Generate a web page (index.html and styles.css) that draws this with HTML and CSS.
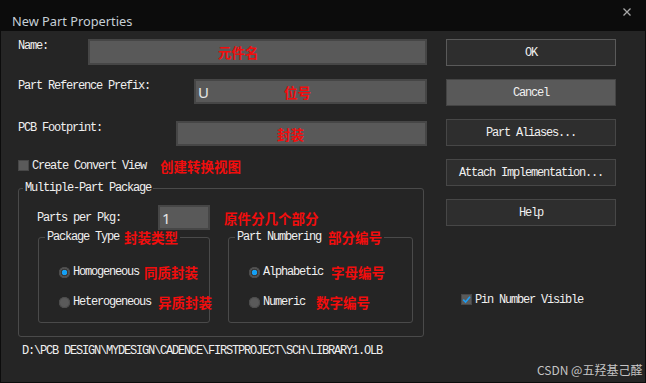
FILE: index.html
```html
<!DOCTYPE html>
<html lang="en">
<head>
    <meta charset="UTF-8">
    <title>New Part Properties</title>
    <link rel="stylesheet" href="styles.css">
</head>
<body>
<div class="window">
    <div class="titlebar">
        <span class="title">New Part Properties</span>
        <svg class="close" width="8" height="8" viewBox="0 0 8 8">
            <path d="M0.5 0.5 L7.5 7.5 M7.5 0.5 L0.5 7.5" stroke="#a8a8a8" stroke-width="1.3" fill="none"/>
        </svg>
    </div>

    <div class="content">
        <div class="left">
            <div class="row row-name">
                <span class="label">Name:</span>
                <div class="field field-name"><span class="note">元件名</span></div>
            </div>
            <div class="row row-prefix">
                <span class="label">Part Reference Prefix:</span>
                <div class="field field-prefix">
                    <span class="value">U</span>
                    <span class="note note-prefix">位号</span>
                </div>
            </div>
            <div class="row row-pcb">
                <span class="label">PCB Footprint:</span>
                <div class="field field-pcb"><span class="note">封装</span></div>
            </div>

            <div class="check-row">
                <span class="box"></span>
                <span class="check-text">Create Convert View</span>
                <span class="note note-convert">创建转换视图</span>
            </div>

            <fieldset class="group">
                <legend>Multiple-Part Package</legend>
                <div class="group-body">
                    <div class="pkg-row">
                        <span class="pkg-label">Parts per Pkg:</span>
                        <div class="field field-pkg"><span class="value">1</span></div>
                        <span class="note note-pkg">原件分几个部分</span>
                    </div>

                    <div class="subgroups">
                        <fieldset class="subgroup sub-type">
                            <legend>Package Type<span class="note note-legend-a">封装类型</span></legend>
                            <div class="sub-body">
                                <div class="radio-row">
                                    <span class="radio on"></span>
                                    <span class="radio-text">Homogeneous</span>
                                    <span class="note note-homo">同质封装</span>
                                </div>
                                <div class="radio-row second">
                                    <span class="radio"></span>
                                    <span class="radio-text">Heterogeneous</span>
                                    <span class="note note-hetero">异质封装</span>
                                </div>
                            </div>
                        </fieldset>
                        <fieldset class="subgroup sub-number">
                            <legend>Part Numbering<span class="note note-legend-b">部分编号</span></legend>
                            <div class="sub-body">
                                <div class="radio-row">
                                    <span class="radio on"></span>
                                    <span class="radio-text">Alphabetic</span>
                                    <span class="note note-alpha">字母编号</span>
                                </div>
                                <div class="radio-row second">
                                    <span class="radio"></span>
                                    <span class="radio-text">Numeric</span>
                                    <span class="note note-numeric">数字编号</span>
                                </div>
                            </div>
                        </fieldset>
                    </div>
                </div>
            </fieldset>

            <div class="path">D:\PCB DESIGN\MYDESIGN\CADENCE\FIRSTPROJECT\SCH\LIBRARY1.OLB</div>
        </div>

        <div class="right">
            <button class="btn btn-default">OK</button>
            <button class="btn btn-hover">Cancel</button>
            <button class="btn">Part Aliases...</button>
            <button class="btn">Attach Implementation...</button>
            <button class="btn">Help</button>

            <div class="check-row pin-row">
                <span class="box checked">
                    <svg width="9" height="9" viewBox="0 0 9 9">
                        <path d="M1.2 4.6 L3.6 7 L8 1.8" stroke="#1e9df2" stroke-width="1.6" fill="none"/>
                    </svg>
                </span>
                <span class="check-text">Pin Number Visible</span>
            </div>
        </div>
    </div>

    <div class="watermark">CSDN @五羟基己醛</div>
</div>
</body>
</html>
```

FILE: styles.css
```css
body { margin: 0; background: #0c0c0c; }

.window {
    position: relative;
    width: 646px;
    height: 383px;
    background: #0c0c0c;
    font-family: "Liberation Mono", monospace;
    font-size: 12px;
    letter-spacing: -1.2px;
    color: #f0f0f0;
    white-space: nowrap;
}

/* Title bar */
.titlebar {
    height: 31px;
    display: flex;
    align-items: flex-start;
    justify-content: space-between;
    padding: 0 15px 0 12px;
    box-sizing: border-box;
}
.title {
    margin-top: 12px;
    font-family: "Noto Sans", sans-serif;
    font-size: 12.8px;
    line-height: 18px;
    letter-spacing: 0;
    color: #c6cfd6;
}
.close { margin-top: 8px; }

/* Dialog body */
.content {
    height: 351px;
    margin: 0 1px;
    background: #252525;
    display: flex;
}
.left {
    width: 409px;
    padding: 8px 0 0 17px;
}
.right {
    width: 170px;
    padding: 8px 0 0 19px;
    display: flex;
    flex-direction: column;
    gap: 13px;
}

.row {
    display: flex;
    align-items: flex-start;
    line-height: 14px;
}
.row-name { height: 26px; }
.row-prefix { height: 25px; margin-top: 14px; }
.row-pcb { height: 25px; margin-top: 17px; }

.field {
    height: 100%;
    box-sizing: border-box;
    border: 2px solid #464646;
    background: #595959;
    display: flex;
    align-items: center;
    flex-shrink: 0;
}
.row .field { margin-left: auto; }
.field-name { width: 339px; padding-left: 128px; }
.field-prefix { width: 233px; padding-left: 2px; }
.field-pcb { width: 251px; padding-left: 99px; }
.field-pkg { width: 52px; height: 25px; padding-left: 2px; }

.value {
    font-family: "Noto Sans", sans-serif;
    font-size: 15px;
    letter-spacing: 0;
    color: #e6e6e6;
}

/* Red annotations */
.note {
    flex-shrink: 0;
    font-family: "Noto Sans CJK SC", sans-serif;
    font-weight: 700;
    font-size: 13.5px;
    line-height: 14px;
    letter-spacing: 0;
    color: #f20d0d;
}
.note-prefix { margin-left: 75px; }
.note-convert { margin-left: 14px; }
.note-pkg { margin-left: 14px; }
.note-legend-a { margin-left: 5px; }
.note-legend-b { margin-left: 7px; }
.note-homo { margin-left: 5px; }
.note-hetero { margin-left: 7px; }
.note-alpha { margin-left: 8px; }
.note-numeric { margin-left: 11px; }

/* Check boxes */
.check-row {
    display: flex;
    align-items: center;
    height: 11px;
    margin-top: 14px;
}
.box {
    width: 11px;
    height: 11px;
    box-sizing: border-box;
    background: #5a5a5a;
    border: 1px solid #474747;
    display: flex;
    align-items: center;
    justify-content: center;
    flex-shrink: 0;
}
.check-text { margin-left: 3px; }
.pin-row { margin-top: 55px; padding-left: 15px; }

/* Group boxes */
.group {
    width: 406px;
    box-sizing: border-box;
    margin: 10px 0 0 0;
    padding: 0;
    border: 1px solid #4a4a4a;
    border-radius: 3px;
    min-inline-size: 0;
}
.group legend,
.subgroup legend {
    display: flex;
    align-items: center;
    height: 14px;
    padding: 0 2px;
    line-height: 14px;
}
.group > legend { margin-left: 4px; }
.group-body { padding: 10px 0 13px 18px; }

.pkg-row {
    display: flex;
    align-items: center;
    height: 25px;
}
.pkg-label { width: 121px; flex-shrink: 0; }

.subgroups {
    display: flex;
    gap: 18px;
    margin-left: 1px;
}
.subgroup {
    box-sizing: border-box;
    margin: 0;
    padding: 0;
    border: 1px solid #4a4a4a;
    border-radius: 3px;
    min-inline-size: 0;
    flex-shrink: 0;
}
.subgroup legend { margin-left: 6px; }
.sub-type { width: 172px; }
.sub-number { width: 185px; }
.sub-body { padding: 21px 0 13px 20px; }

.radio-row {
    display: flex;
    align-items: center;
    height: 14px;
}
.radio-row.second { margin-top: 16px; }
.radio {
    width: 11px;
    height: 11px;
    flex-shrink: 0;
    border-radius: 50%;
    background: #5a5a5a;
    box-shadow: inset 0 0 0 1px #4c4c4c;
}
.radio.on {
    background: radial-gradient(circle, #14a0f5 0 2.4px, #3a3a3a 3px 3.6px, #5a5a5a 4.2px);
}
.radio-text { margin-left: 3px; }

.path {
    margin-top: 7px;
    padding-left: 4px;
    line-height: 14px;
}

/* Buttons */
.btn {
    height: 27px;
    box-sizing: border-box;
    margin: 0;
    padding: 0;
    border: 1px solid #474747;
    background: #2e2e2e;
    color: #f0f0f0;
    font: inherit;
    letter-spacing: inherit;
}
.btn-default { border-color: #5a5a5a; }
.btn-hover { background: #595959; border-color: #444444; }

.watermark {
    position: absolute;
    left: 537px;
    top: 362px;
    font-family: "Noto Sans CJK SC", sans-serif;
    font-size: 12px;
    line-height: 16px;
    letter-spacing: 0;
    color: #c4c4c4;
}
```
